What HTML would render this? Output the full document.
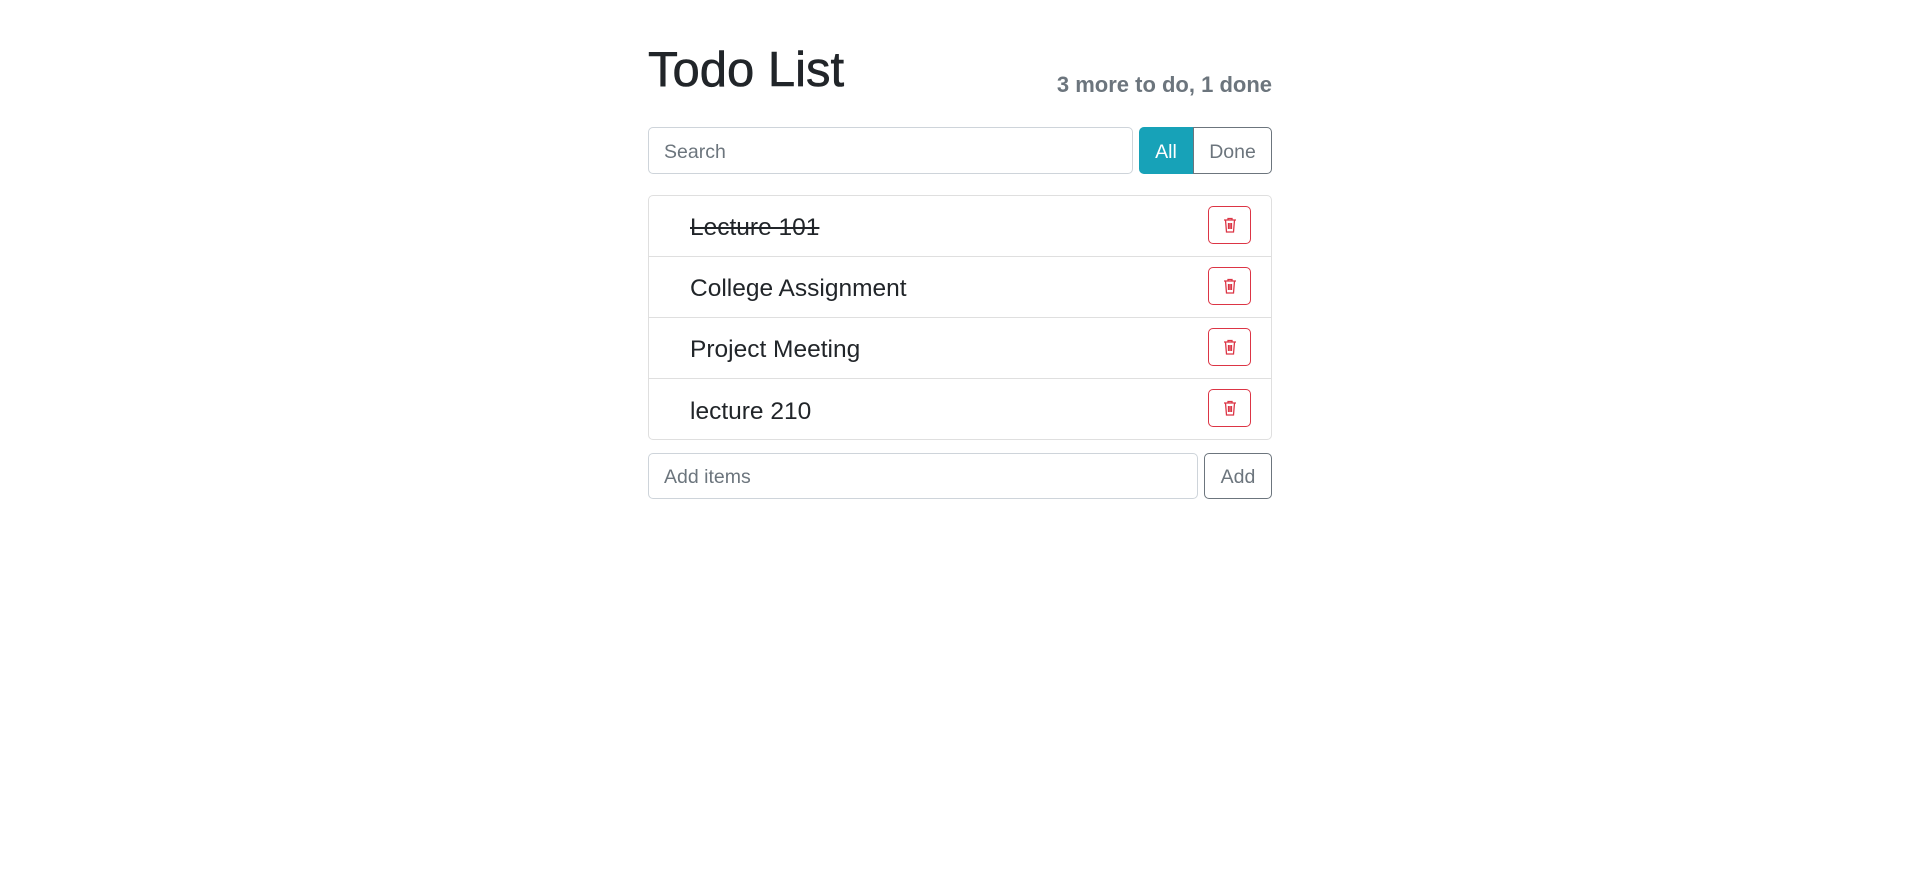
<!DOCTYPE html>
<html><head><style>
body{margin:0;background:#fff;font-family:"Liberation Sans",sans-serif;color:#212529;width:1920px;height:892px;overflow:hidden}
h1{position:absolute;left:648px;top:40px;margin:0;font-size:49px;font-weight:500;line-height:60px;-webkit-text-stroke:0.6px #212529}
.sub{position:absolute;right:648px;top:72px;font-size:22px;font-weight:bold;color:#6c757d}
.inp{position:absolute;box-sizing:border-box;border:1px solid #ced4da;border-radius:5px;font-size:19.5px;color:#6c757d;padding-left:15px;padding-top:3px;display:flex;align-items:center}
.btn{position:absolute;box-sizing:border-box;border:1px solid #6c757d;font-size:19.5px;color:#6c757d;display:flex;align-items:center;justify-content:center;padding-top:3px}
.list{position:absolute;left:648px;top:195px;width:624px;height:245px;box-sizing:border-box;border:1px solid #dfdfdf;border-radius:5px}
.row{height:61px;border-bottom:1px solid #dfdfdf;box-sizing:border-box;position:relative;font-size:24.5px;display:flex;align-items:center;padding-left:41px;padding-top:4px}
.row:last-child{border-bottom:none}
.del{position:absolute;left:559px;top:10px;width:43px;height:38px;box-sizing:border-box;border:1px solid #dc3545;border-radius:5px;display:flex;align-items:center;justify-content:center}
</style></head><body>
<h1>Todo List</h1>
<div class="sub">3 more to do, 1 done</div>
<div class="inp" style="left:648px;top:127px;width:485px;height:47px">Search</div>
<div class="btn" style="left:1139px;top:127px;width:54px;height:47px;background:#17a2b8;border-color:#17a2b8;color:#fff;border-radius:5px 0 0 5px">All</div>
<div class="btn" style="left:1193px;top:127px;width:79px;height:47px;border-radius:0 5px 5px 0">Done</div>
<div class="list">
<div class="row"><s>Lecture 101</s><div class="del"><svg width="14" height="16" viewBox="0 0 14 16" fill="none" stroke="#dc3545" stroke-width="1.3"><path d="M1 3h12M5 3V1.5h4V3M2.5 3l1 12h7l1-12M5.5 6v6M7 6v6M8.5 6v6"/></svg></div></div>
<div class="row">College Assignment<div class="del"><svg width="14" height="16" viewBox="0 0 14 16" fill="none" stroke="#dc3545" stroke-width="1.3"><path d="M1 3h12M5 3V1.5h4V3M2.5 3l1 12h7l1-12M5.5 6v6M7 6v6M8.5 6v6"/></svg></div></div>
<div class="row">Project Meeting<div class="del"><svg width="14" height="16" viewBox="0 0 14 16" fill="none" stroke="#dc3545" stroke-width="1.3"><path d="M1 3h12M5 3V1.5h4V3M2.5 3l1 12h7l1-12M5.5 6v6M7 6v6M8.5 6v6"/></svg></div></div>
<div class="row">lecture 210<div class="del"><svg width="14" height="16" viewBox="0 0 14 16" fill="none" stroke="#dc3545" stroke-width="1.3"><path d="M1 3h12M5 3V1.5h4V3M2.5 3l1 12h7l1-12M5.5 6v6M7 6v6M8.5 6v6"/></svg></div></div>
</div>
<div class="inp" style="left:648px;top:453px;width:550px;height:46px">Add items</div>
<div class="btn" style="left:1204px;top:453px;width:68px;height:46px;border-radius:5px">Add</div>
</body></html>
